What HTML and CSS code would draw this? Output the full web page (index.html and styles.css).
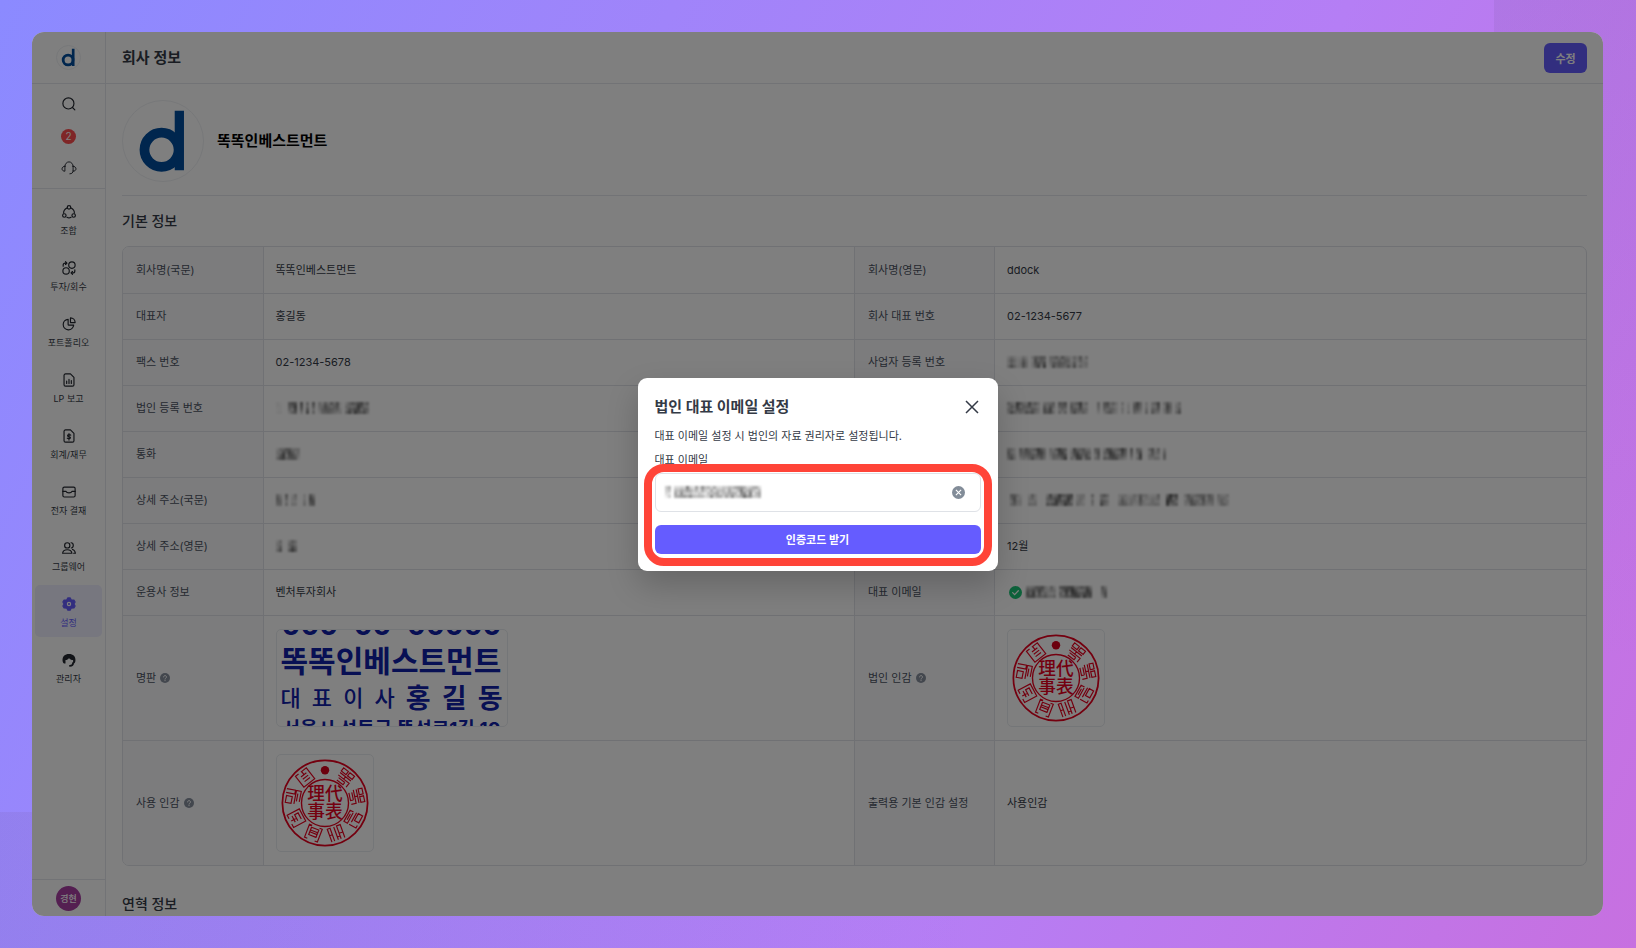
FILE: index.html
```html
<!DOCTYPE html>
<html lang="ko">
<head>
  <meta charset="UTF-8">
  <meta name="viewport" content="width=device-width, initial-scale=1.0">
  <title>회사 정보</title>
  <link rel="stylesheet" href="styles.css">
</head>
<body>
  <!-- shared symbols -->
  <svg class="defs" width="0" height="0" aria-hidden="true">
    <symbol id="logo" viewBox="0 0 82 82">
      <circle cx="39.500" cy="50" r="17.500" fill="none" stroke="#004c9c" stroke-width="10"/>
      <path d="M53 10h9.500v61H53z" fill="#004c9c"/>
    </symbol>
    <symbol id="help" viewBox="0 0 16 16">
      <circle cx="8" cy="8" r="8" fill="#868e9c"/>
      <path d="M5.700 6.300a2.300 2.300 0 1 1 3.500 2c-.8.500-1.200.8-1.200 1.500" fill="none" stroke="#fff" stroke-width="1.600" stroke-linecap="round"/>
      <circle cx="8" cy="12" r="1" fill="#fff"/>
    </symbol>
  </svg>

  <div class="deco deco-top"></div>
  <div class="deco deco-bottom"></div>

  <div class="app">
    <aside class="sidebar">
      <a class="brand" href="#" aria-label="ddock"><svg><use href="#logo"/></svg></a>

      <div class="tools">
        <button class="tool" aria-label="검색">
          <svg viewBox="0 0 24 24"><circle cx="11" cy="11" r="9.500"/><path d="M18 18l4 4"/></svg>
        </button>
        <button class="tool" aria-label="알림"><span class="badge">2</span></button>
        <button class="tool tool-thin" aria-label="고객센터">
          <svg viewBox="0 0 24 24"><path d="M5 9a7 7.500 0 0 1 14 0M5 9v8.500c-2.500 0-5-1.300-5-4S2.500 9 5 9zM19 9v8.500c2.500 0 5-1.300 5-4S21.500 9 19 9zM19 17c0 3-2 5-5.500 5"/></svg>
        </button>
      </div>

      <nav class="menu">
        <a href="#">
          <svg viewBox="0 0 24 24"><circle cx="12" cy="4" r="3"/><circle cx="4" cy="18" r="3"/><circle cx="20" cy="18" r="3"/><path d="M8.500 5C4.500 7 2.500 10 2.800 14M15.500 5c4 2 6 5 5.700 9M8.500 21c2.200 1.300 4.800 1.300 7 0"/></svg>
          <span>조합</span>
        </a>
        <a href="#">
          <svg viewBox="0 0 24 24"><circle cx="17" cy="7" r="5.500"/><circle cx="7" cy="17" r="5.500"/><path d="M2 9V7c0-2 1.300-3.500 3.500-3.500H8M6 1l2.500 2.500L6 6M22 15v2c0 2-1.300 3.500-3.500 3.500H16M18 18l-2.500 2.500L18 23"/></svg>
          <span>투자/회수</span>
        </a>
        <a href="#">
          <svg viewBox="0 0 24 24"><path d="M10.500 4A9 9 0 1 0 20 14h-8.500a1 1 0 0 1-1-1z"/><path d="M14.500 1.500v8h8a8 8 0 0 0-8-8z"/></svg>
          <span>포트폴리오</span>
        </a>
        <a href="#">
          <svg viewBox="0 0 24 24"><path d="M14.500 1.500H6a2.500 2.500 0 0 0-2.500 2.500v16A2.500 2.500 0 0 0 6 22.500h12a2.500 2.500 0 0 0 2.500-2.500V7.500zM8 14v4M12 11v7M16 13v5"/></svg>
          <span>LP 보고</span>
        </a>
        <a href="#">
          <svg viewBox="0 0 24 24"><path d="M14.500 1.500H6a2.500 2.500 0 0 0-2.500 2.500v16A2.500 2.500 0 0 0 6 22.500h12a2.500 2.500 0 0 0 2.500-2.500V7.500zM15 10.500c-1-1-5.500-1.300-5.500 1s5 1.200 5 3.300-4.500 2-5.500.8M12 8v11"/></svg>
          <span>회계/재무</span>
        </a>
        <a href="#">
          <svg viewBox="0 0 24 24"><rect x="1.500" y="3.500" width="21" height="17" rx="2.500"/><path d="M1.500 11H7c1 3.500 9 3.500 10 0h5.500"/></svg>
          <span>전자 결재</span>
        </a>
        <a href="#">
          <svg viewBox="0 0 24 24"><circle cx="9" cy="7.500" r="4.500"/><path d="M1 21c.5-4 3.500-6 8-6s7.500 2 8 6zM15.500 3c5 0 5 8.500.5 9M18 14.500c3 .8 4.500 3 5 6.500h-3"/></svg>
          <span>그룹웨어</span>
        </a>
        <a href="#" class="active">
          <svg viewBox="0 0 24 24"><path d="M10 1.500h4l2 3.500 4.500.2 2 3.300-2 3.500 2 3.500-2 3.300L16 19l-2 3.500h-4L8 19l-4.500-.2-2-3.300 2-3.500-2-3.500 2-3.300L8 5z" fill="#655cff" stroke="#655cff"/><circle cx="12" cy="12" r="2.800" stroke="#fff"/></svg>
          <span>설정</span>
        </a>
        <a href="#">
          <svg viewBox="0 0 24 24"><path d="M1 13.500C0 6 5 1.500 12 1.500S24 6 23 13.500c-.4 2.800-1.600 4.500-4 4.500v-6c-3 0-5.300-1-7-3.500C10.500 11 8.500 12 6 12v6c-3 .5-4.600-1.700-5-4.500z" fill="#22262e" stroke="none"/><path d="M19 17c0 3-2 5-5.500 5" stroke-width="3"/></svg>
          <span>관리자</span>
        </a>
      </nav>

      <div class="account"><button class="avatar">경현</button></div>
    </aside>

    <main class="main">
      <header class="topbar">
        <h1>회사 정보</h1>
        <button class="primary edit">수정</button>
      </header>

      <div class="content">
        <section class="profile">
          <svg class="company-logo"><use href="#logo"/></svg>
          <strong>똑똑인베스트먼트</strong>
        </section>

        <h2>기본 정보</h2>
        <div class="table-box">
          <table>
            <tr>
              <th scope="row">회사명(국문)</th><td>똑똑인베스트먼트</td>
              <th scope="row">회사명(영문)</th><td>ddock</td>
            </tr>
            <tr>
              <th scope="row">대표자</th><td>홍길동</td>
              <th scope="row">회사 대표 번호</th><td>02-1234-5677</td>
            </tr>
            <tr>
              <th scope="row">팩스 번호</th><td>02-1234-5678</td>
              <th scope="row">사업자 등록 번호</th><td><span class="mosaic" data-cols="485226303675803675847262625"></span></td>
            </tr>
            <tr>
              <th scope="row">법인 등록 번호</th><td><span class="mosaic" data-cols="1100578070707034658462057888867"></span></td>
              <th scope="row"></th><td><span class="mosaic" data-cols="6858847867406575065705678450004057563040305740405670474046"></span></td>
            </tr>
            <tr>
              <th scope="row">통화</th><td><span class="mosaic" data-cols="46867653"></span></td>
              <th scope="row"></th><td><span class="mosaic" data-cols="56305465678740347878047875670560678767850605800564505"></span></td>
            </tr>
            <tr>
              <th scope="row">상세 주소(국문)</th><td><span class="mosaic" data-cols="5406034003076"></span></td>
              <th scope="row"></th><td><span class="mosaic" data-cols="05642004530007888888880333006007850003543333643334500999800456565645403454"></span></td>
            </tr>
            <tr>
              <th scope="row">상세 주소(영문)</th><td><span class="mosaic" data-cols="4600685"></span></td>
              <th scope="row"></th><td>12월</td>
            </tr>
            <tr>
              <th scope="row">운용사 정보</th><td>벤처투자회사</td>
              <th scope="row">대표 이메일</th>
              <td>
                <span class="verified">
                  <svg viewBox="0 0 16 16"><circle cx="8" cy="8" r="8" fill="#1cc576"/><path d="m4.500 8.200 2.400 2.400 4.600-4.800" fill="none" stroke="#fff" stroke-width="1.500" stroke-linecap="round"/></svg>
                  <span class="mosaic" data-cols="78867754550878898788870005600"></span>
                </span>
              </td>
            </tr>
            <tr class="tall">
              <th scope="row">명판 <svg class="help"><use href="#help"/></svg></th>
              <td>
                <div class="plate">
                  <div class="plate-number"><span>000</span><span>00</span><span>00000</span></div>
                  <div class="plate-name">똑똑인베스트먼트</div>
                  <div class="plate-ceo">
                    <span>대</span><span>표</span><span>이</span><span>사</span>
                    <b>홍</b><b>길</b><b>동</b>
                  </div>
                  <div class="plate-address"><span>서울시</span><span>성동구</span><span>뚝섬로1길</span><span>10</span></div>
                </div>
              </td>
              <th scope="row">법인 인감 <svg class="help"><use href="#help"/></svg></th>
              <td>
                <svg class="stamp" viewBox="0 0 98 98">
                  <g id="seal">
                    <g fill="none" stroke="#e8001f">
                      <circle cx="49" cy="49" r="43.500" stroke-width="1.800"/>
                      <circle cx="49" cy="49" r="24" stroke-width="1.400"/>
                      <g stroke-width="1.200">
                        <path transform="rotate(38 49 49)" d="M42 9h6v4h-6zM50 9h6v4h-6zM42 15h14M49 15v3M42 18h14v5M44 20h8M44 23h8v-3"/>
                        <path transform="rotate(78 49 49)" d="M42 9h6v4h-6zM50 9h6v4h-6zM42 15h14M49 15v3M42 18h14v5M44 20h8M44 23h8v-3"/>
                        <path transform="rotate(119 49 49)" d="M42 9h8v5h-8zM53 9h3v8M42 16h11M44 19h12v4H43v-4M46 21h7"/>
                        <path transform="rotate(160 49 49)" d="M42 9v14h4V9M42 15h4M49 9v14M53 9v14h3V9M46 12h3M53 16h3"/>
                        <path transform="rotate(201 49 49)" d="M45 9h-3v14h3M53 9h3v14h-3M45 13h8v8h-8zM45 16h8M45 18h8"/>
                        <path transform="rotate(242 49 49)" d="M46 9h-4v14h14V9h-4M46 13h7M46 16h7v4h-7M49 10v6"/>
                        <path transform="rotate(281 49 49)" d="M42 9h7v6h-7zM52 8v9h4V8M42 18h14v5H45M45 20h8"/>
                        <path transform="rotate(322 49 49)" d="M46 9h-4v14h14V9h-7M46 13h7M46 16h7M46 19h7M50 9v4"/>
                      </g>
                    </g>
                    <circle cx="49" cy="15.500" r="4.300" fill="#d8001c"/>
                    <g class="seal-text" fill="#e8001f" text-anchor="middle">
                      <text x="40" y="46">理</text>
                      <text x="58" y="46">代</text>
                      <text x="40" y="64">事</text>
                      <text x="58" y="64">表</text>
                    </g>
                  </g>
                </svg>
              </td>
            </tr>
            <tr class="tall">
              <th scope="row">사용 인감 <svg class="help"><use href="#help"/></svg></th>
              <td><svg class="stamp" viewBox="0 0 98 98"><use href="#seal"/></svg></td>
              <th scope="row">출력용 기본 인감 설정</th><td>사용인감</td>
            </tr>
          </table>
        </div>

        <h2 class="history">연혁 정보</h2>
      </div>
    </main>

    <div class="backdrop">
      <form class="modal" role="dialog" aria-labelledby="modal-title">
        <div class="modal-head">
          <h2 id="modal-title">법인 대표 이메일 설정</h2>
          <button type="button" class="close" aria-label="닫기">
            <svg viewBox="0 0 14 14"><path d="M1 1l12 12M13 1 1 13"/></svg>
          </button>
        </div>
        <p>대표 이메일 설정 시 법인의 자료 권리자로 설정됩니다.</p>
        <label for="email">대표 이메일</label>
        <div class="highlight">
          <div class="email-box">
            <input type="text" id="email">
            <span class="mosaic email-value" data-cols="350566788564746875645567678775750"></span>
            <button type="button" class="clear" aria-label="지우기">
              <svg viewBox="0 0 14 14"><circle cx="7" cy="7" r="7" fill="#828c98"/><path d="m4.200 4.200 5.600 5.600M9.800 4.200 4.200 9.800" stroke="#fff" stroke-width="1.200"/></svg>
            </button>
          </div>
          <button type="button" class="primary send">인증코드 받기</button>
        </div>
      </form>
    </div>
  </div>

  <script src="script.js"></script>
</body>
</html>
```
FILE: styles.css
```css
* {
  box-sizing: border-box;
}

body {
  margin: 0;
  padding: 32px 33px 32px 32px;
  height: 100vh;
  overflow: hidden;
  position: relative;
  font-family: Inter, "Noto Sans CJK KR", sans-serif;
  font-size: 11px;
  line-height: 16px;
  color: #343a46;
  background: linear-gradient(115deg, #8b8aff 0%, #b57ef5 65%, #c770e0 100%);
}

button {
  font-family: inherit;
  border: none;
  padding: 0;
  background: none;
  cursor: pointer;
}

a {
  color: inherit;
  text-decoration: none;
}

h1, h2, p {
  margin: 0;
}

.defs {
  position: absolute;
}

/* darker shapes behind the window */
.deco {
  position: absolute;
}

.deco-top {
  top: 0;
  right: 0;
  width: 142px;
  height: 70%;
  background: linear-gradient(rgba(120, 90, 160, 0.15), rgba(120, 90, 160, 0));
}

.deco-bottom {
  bottom: 0;
  left: 0;
  width: 60%;
  height: 136px;
  background: linear-gradient(90deg, rgba(120, 90, 160, 0.15), rgba(120, 90, 160, 0));
}

.app {
  position: relative;
  display: flex;
  height: 100%;
  border-radius: 12px;
  overflow: hidden;
  background: #fff;
}

/* sidebar */
.sidebar {
  display: flex;
  flex-direction: column;
  flex: none;
  width: 74px;
  border-right: 1px solid #e4e7ec;
}

.brand {
  display: flex;
  align-items: center;
  justify-content: center;
  height: 52px;
  border-bottom: 1px solid #e4e7ec;
}

.brand svg {
  width: 25px;
  height: 25px;
  border: 1px solid #eef0f3;
  border-radius: 50%;
}

.tools {
  display: flex;
  flex-direction: column;
  align-items: center;
  gap: 16px;
  padding: 12px 0;
  border-bottom: 1px solid #e4e7ec;
}

.tool {
  display: flex;
  align-items: center;
  justify-content: center;
  width: 24px;
  height: 16px;
}

.tool svg,
.menu svg {
  width: 14px;
  height: 14px;
  fill: none;
  stroke: #22262e;
  stroke-width: 2;
  stroke-linecap: round;
  stroke-linejoin: round;
  overflow: visible;
}

.tool-thin svg {
  stroke-width: 1.6;
}

.badge {
  width: 15px;
  height: 15px;
  border-radius: 50%;
  background: #ff4d4f;
  color: #fff;
  font-size: 10px;
  line-height: 15px;
}

.menu {
  display: flex;
  flex-direction: column;
  flex: 1;
  gap: 4px;
  padding: 4px 3px;
}

.menu a {
  display: flex;
  flex-direction: column;
  align-items: center;
  gap: 5px;
  height: 52px;
  padding-top: 12px;
  border-radius: 5px;
  font-size: 9px;
  line-height: 14px;
}

.menu .active {
  background: #eeeeff;
  color: #655cff;
}

.account {
  display: flex;
  align-items: center;
  justify-content: center;
  height: 37px;
  border-top: 1px solid #e4e7ec;
}

.avatar {
  width: 25px;
  height: 25px;
  border-radius: 50%;
  background: #a83fa3;
  color: #fff;
  font-size: 9px;
  font-weight: 500;
}

/* main */
.main {
  flex: 1;
  min-width: 0;
}

.topbar {
  display: flex;
  align-items: center;
  justify-content: space-between;
  height: 52px;
  padding: 0 16px;
  border-bottom: 1px solid #e4e7ec;
}

.topbar h1 {
  font-size: 15px;
  font-weight: 600;
}

.primary {
  border-radius: 6px;
  background: #655cff;
  color: #fff;
  font-size: 11px;
  font-weight: 700;
}

.edit {
  width: 43px;
  height: 30px;
}

.content {
  padding: 0 16px;
}

.profile {
  display: flex;
  align-items: center;
  gap: 13px;
  padding: 16px 0 13px;
  border-bottom: 1px solid #e4e7ec;
  color: #000;
  font-size: 15px;
}

.company-logo {
  width: 82px;
  height: 82px;
  border: 1px solid #eef0f3;
  border-radius: 50%;
}

.content h2 {
  font-size: 14px;
  font-weight: 500;
  line-height: 50px;
}

.content .history {
  margin-top: 13px;
}

.table-box {
  border: 1px solid #e0e3e8;
  border-radius: 7px;
  overflow: hidden;
}

table {
  width: 100%;
  table-layout: fixed;
  border-collapse: collapse;
}

th,
td {
  height: 46px;
  padding: 0 13px;
  border-bottom: 1px solid #e0e3e8;
  text-align: left;
  vertical-align: middle;
}

td {
  padding-left: 12px;
}

th {
  width: 140px;
  border-right: 1px solid #e0e3e8;
  background: #f8f9fb;
  color: #4b5261;
  font-weight: 400;
}

td + th {
  border-left: 1px solid #e0e3e8;
}

.tall th,
.tall td {
  height: 125px;
}

tr:last-child th,
tr:last-child td {
  border-bottom: none;
}

.help {
  width: 10px;
  height: 10px;
  margin-left: 1px;
  vertical-align: -1px;
}

.verified {
  display: flex;
  align-items: center;
  gap: 4px;
  padding-left: 2px;
}

.verified > svg {
  width: 13px;
  height: 13px;
}

.mosaic {
  display: flex;
}

.mosaic svg {
  display: block;
  filter: blur(1px);
}

/* stamps */
.plate,
.stamp {
  display: block;
  height: 98px;
  border: 1px solid #e9ecf0;
  border-radius: 5px;
}

.stamp {
  width: 98px;
}

.seal-text {
  font-family: "Noto Sans CJK KR", sans-serif;
  font-size: 18px;
  font-weight: 500;
}

.plate {
  display: flex;
  flex-direction: column;
  justify-content: center;
  width: 232px;
  padding: 0 4px 5px;
  overflow: hidden;
  color: #1020a8;
}

.plate div {
  display: flex;
  flex: none;
  justify-content: space-between;
  white-space: nowrap;
}

.plate-number {
  padding: 0 1px;
  font-size: 28px;
  font-weight: 700;
  line-height: 36px;
}

.plate-name {
  font-size: 30px;
  font-weight: 700;
  line-height: 37px;
}

.plate-ceo {
  align-items: center;
  font-size: 22px;
  font-weight: 500;
  line-height: 37px;
}

.plate-ceo b {
  font-size: 27px;
}

.plate-address {
  padding: 0 2px;
  font-size: 19px;
  font-weight: 700;
  line-height: 26px;
}

/* modal */
.backdrop {
  position: absolute;
  inset: 0;
  display: flex;
  align-items: center;
  justify-content: center;
  background: rgba(0, 0, 0, 0.5);
}

.modal {
  width: 360px;
  padding: 17px;
  border-radius: 9px;
  background: #fff;
  box-shadow: 0 14px 32px rgba(0, 0, 0, 0.2);
}

.modal-head {
  display: flex;
  align-items: center;
  justify-content: space-between;
  height: 24px;
}

.modal-head h2 {
  font-size: 15px;
  font-weight: 700;
}

.close {
  width: 18px;
  height: 20px;
}

.close svg {
  display: block;
  width: 14px;
  height: 14px;
  margin: auto;
  stroke: #343a46;
  stroke-width: 1.5;
}

.modal p {
  margin: 9px 0 8px;
}

.modal label {
  display: block;
  margin-bottom: 5px;
}

.highlight {
  position: relative;
}

/* red frame drawn over the field and the button */
.highlight::after {
  content: "";
  position: absolute;
  inset: -9px -11px -12px;
  border: 8px solid #ff4438;
  border-radius: 20px;
  pointer-events: none;
}

.email-box {
  position: relative;
  display: flex;
  align-items: center;
  height: 39px;
  padding-right: 15px;
  border: 1px solid #dfe2e7;
  border-radius: 6px;
}

.email-box input {
  flex: 1;
  min-width: 0;
  height: 100%;
  padding: 0 9px;
  border: none;
  outline: none;
  background: none;
  font: inherit;
}

.email-value {
  position: absolute;
  left: 9px;
}

.clear svg {
  display: block;
  width: 13px;
  height: 13px;
}

.send {
  display: block;
  width: 100%;
  height: 29px;
  margin-top: 13px;
}
```
FILE: script.js
```js
// draws masked values as small grey blocks, one digit per column (0 = empty)
var SIZE = 3;
var ROWS = 4;
var shade = [0.4, 0.8, 0.5, 0.9, 0.3, 0.7, 0.6];

document.querySelectorAll('.mosaic').forEach(function(el) {
  var cols = el.dataset.cols;
  var rects = '';

  for (var c = 0; c < cols.length; c++) {
    for (var r = 0; r < ROWS; r++) {
      var alpha = Number(cols[c]) / 10 * shade[(c * 3 + r * 5 + Number(cols[c])) % shade.length];
      if (alpha > 0) {
        rects += '<rect x="' + c * SIZE + '" y="' + r * SIZE + '" width="' + SIZE + '" height="' + SIZE +
          '" fill="#333" fill-opacity="' + alpha.toFixed(2) + '"/>';
      }
    }
  }

  el.innerHTML = '<svg width="' + cols.length * SIZE + '" height="' + ROWS * SIZE + '">' + rects + '</svg>';
});
```
